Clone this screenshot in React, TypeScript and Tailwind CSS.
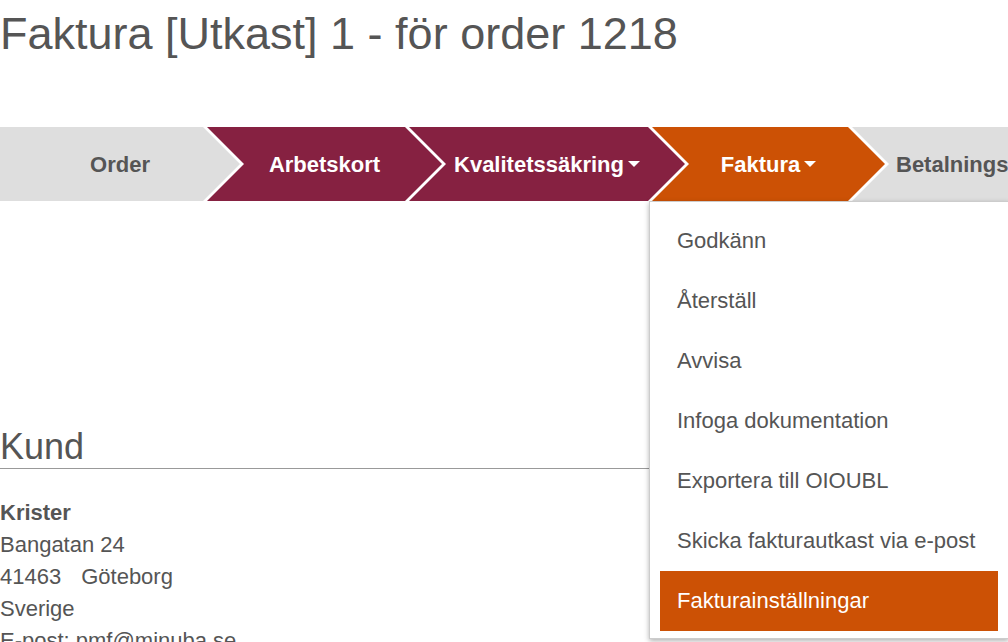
import React from "react";

const FONT = { fontFamily: '"Liberation Sans", Arial, sans-serif' };

function Caret() {
  return (
    <span className="ml-[4px] inline-block h-0 w-0 border-l-[6px] border-r-[6px] border-t-[6px] border-l-transparent border-r-transparent border-t-white" />
  );
}

export default function App() {
  const items = [
    "Godkänn",
    "Återställ",
    "Avvisa",
    "Infoga dokumentation",
    "Exportera till OIOUBL",
    "Skicka fakturautkast via e-post",
  ];
  return (
    <div className="relative h-[642px] w-[1008px] overflow-hidden bg-white text-[#555555]" style={FONT}>
      <h1 className="pt-[8px] text-[45px] leading-[52px] font-normal text-[#555555]">
        Faktura [Utkast] 1 - för order 1218
      </h1>

      <div className="mt-[67px] flex h-[74px] w-full overflow-hidden">
        <div className="flex h-full w-[240px] shrink-0 items-center justify-center bg-[#dedede] pl-[37px] pr-[37px] text-[22px] font-bold text-[#555555] [clip-path:polygon(0_0,calc(100%_-_37px)_0,100%_50%,calc(100%_-_37px)_100%,0_100%)]">
          Order
        </div>
        <div className="ml-[-33px] flex h-full w-[235px] shrink-0 items-center justify-center bg-[#862141] pl-[37px] pr-[37px] text-[22px] font-bold text-white [clip-path:polygon(0_0,calc(100%_-_37px)_0,100%_50%,calc(100%_-_37px)_100%,0_100%,37px_50%)]">
          Arbetskort
        </div>
        <div className="ml-[-33px] flex h-full w-[276px] shrink-0 items-center justify-center bg-[#862141] pl-[37px] pr-[37px] text-[22px] font-bold text-white [clip-path:polygon(0_0,calc(100%_-_37px)_0,100%_50%,calc(100%_-_37px)_100%,0_100%,37px_50%)]">
          Kvalitetssäkring
          <Caret />
        </div>
        <div className="ml-[-33px] flex h-full w-[233px] shrink-0 items-center justify-center bg-[#cc5105] pl-[37px] pr-[37px] text-[22px] font-bold text-white [clip-path:polygon(0_0,calc(100%_-_37px)_0,100%_50%,calc(100%_-_37px)_100%,0_100%,37px_50%)]">
          Faktura
          <Caret />
        </div>
        <div className="ml-[-33px] flex h-full w-[300px] shrink-0 items-center justify-start whitespace-nowrap bg-[#dedede] pl-[44px] text-[22px] font-bold text-[#555555] [clip-path:polygon(0_0,100%_0,100%_100%,0_100%,37px_50%)]">
          Betalningsstatus
        </div>
      </div>

      <div className="mt-[225px]">
        <h2 className="border-b border-[#999999] text-[36px] leading-[42px] font-normal text-[#555555]">
          Kund
        </h2>
        <div className="mt-[28px] text-[22px] leading-[32px] text-[#555555]">
          <div className="font-bold">Krister</div>
          <div>Bangatan 24</div>
          <div className="flex gap-[20px]">
            <span>41463</span>
            <span>Göteborg</span>
          </div>
          <div>Sverige</div>
          <div>E-post: pmf@minuba.se</div>
        </div>
      </div>

      <div className="absolute left-[649px] top-[201px] w-[360px] border border-[#cccccc] bg-white px-[10px] pb-[7px] pt-[9px] shadow-[0_2px_5px_rgba(0,0,0,0.3)]">
        {items.map((t) => (
          <div key={t} className="h-[60px] px-[17px] text-[22px] leading-[60px] whitespace-nowrap text-[#555555]">
            {t}
          </div>
        ))}
        <div className="h-[60px] bg-[#cc5105] px-[17px] text-[22px] leading-[60px] whitespace-nowrap text-white">
          Fakturainställningar
        </div>
      </div>
    </div>
  );
}
